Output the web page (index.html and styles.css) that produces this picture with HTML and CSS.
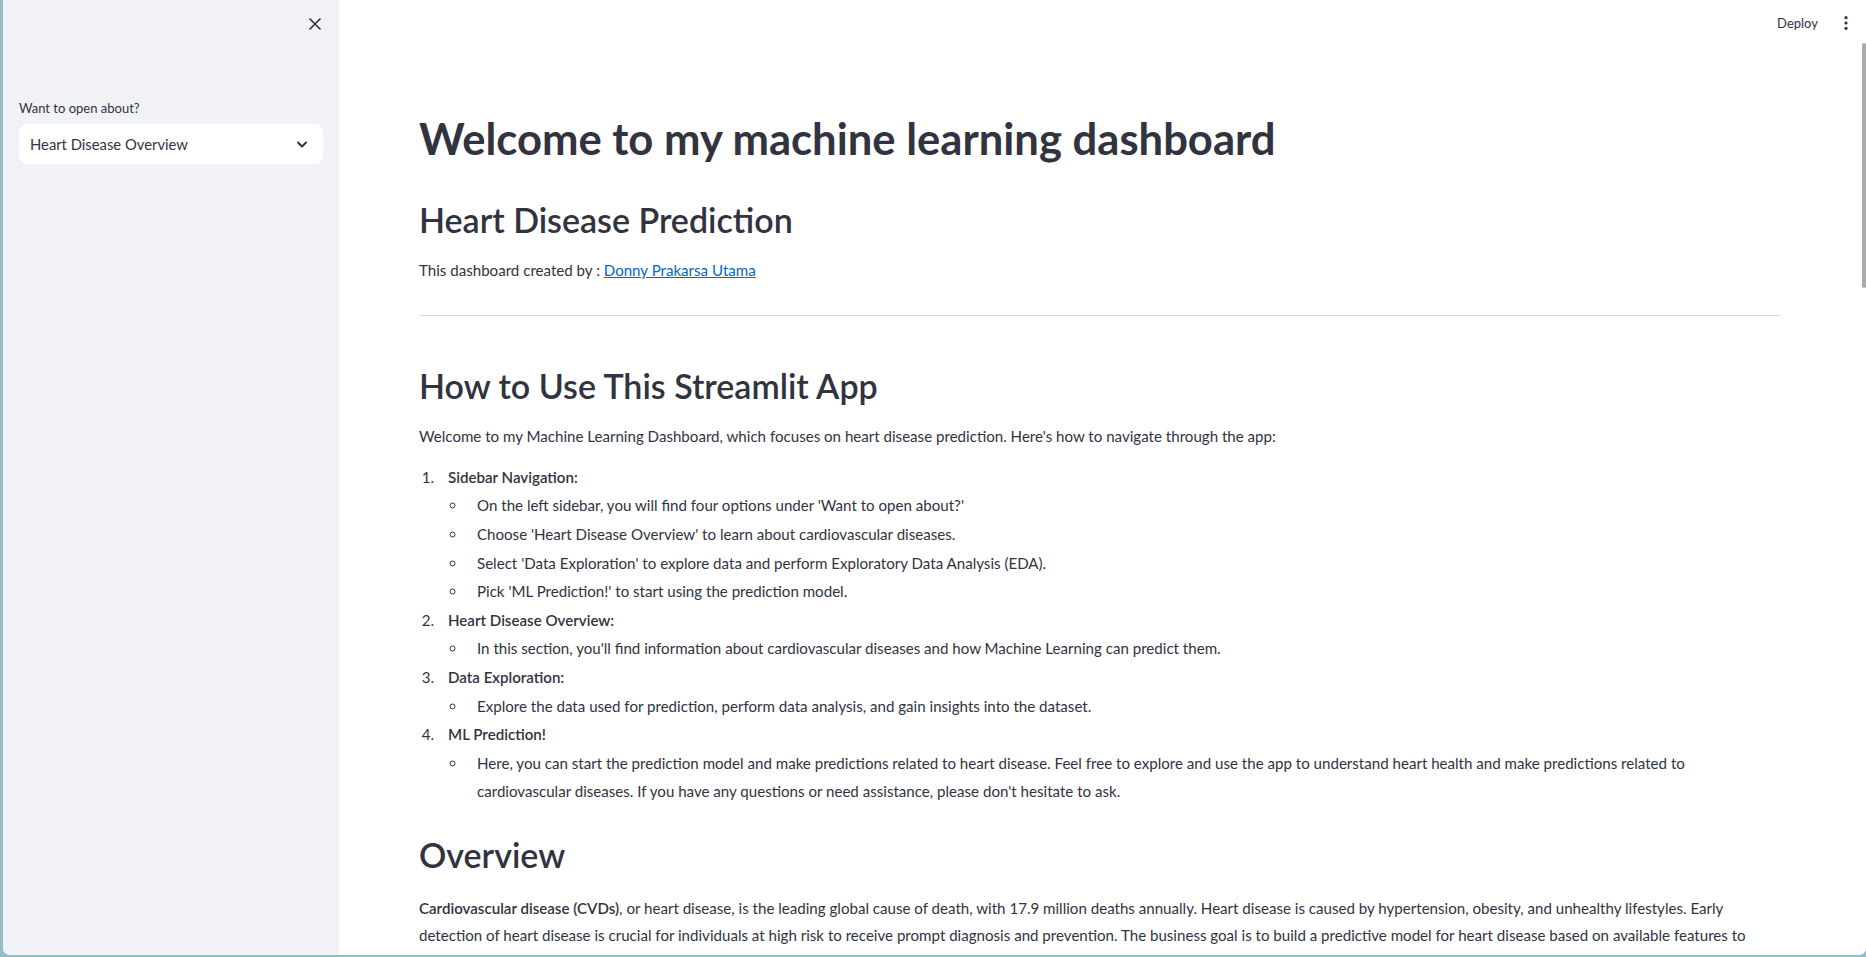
FILE: index.html
```html
<!DOCTYPE html>
<html lang="en">
<head>
<meta charset="utf-8">
<title>Heart Disease Overview</title>
<link rel="stylesheet" href="styles.css">
</head>
<body>
<div class="window">
  <aside class="sidebar">
    <div class="sidebar-top">
      <button class="icon-btn" aria-label="Close sidebar">
        <svg width="12" height="12" viewBox="0 0 12 12"><path d="M1 1L11 11M11 1L1 11" stroke="#31333f" stroke-width="1.7" stroke-linecap="round"/></svg>
      </button>
    </div>
    <div class="sidebar-body">
      <div class="widget-label">Want to open about?</div>
      <div class="select">
        <span class="select-value">Heart Disease Overview</span>
        <svg class="chevron" width="12" height="12" viewBox="0 0 12 12"><path d="M2 4.5L6 8.5L10 4.5" fill="none" stroke="#31333f" stroke-width="2" stroke-linecap="round" stroke-linejoin="round"/></svg>
      </div>
    </div>
  </aside>
  <main class="main">
    <header class="topbar">
      <span class="deploy">Deploy</span>
      <button class="icon-btn" aria-label="Main menu">
        <svg width="6" height="16" viewBox="0 0 6 16" fill="#31333f"><circle cx="3" cy="2.7" r="1.6"/><circle cx="3" cy="8" r="1.6"/><circle cx="3" cy="13.3" r="1.6"/></svg>
      </button>
    </header>
    <div class="content">
      <h1 class="title">Welcome to my machine learning dashboard</h1>
      <h2 class="subtitle">Heart Disease Prediction</h2>
      <p class="byline">This dashboard created by : <a href="#">Donny Prakarsa Utama</a></p>
      <hr class="divider">
      <h2 class="section-title">How to Use This Streamlit App</h2>
      <p class="intro">Welcome to my Machine Learning Dashboard, which focuses on heart disease prediction. Here's how to navigate through the app:</p>
      <ol class="steps">
        <li><strong>Sidebar Navigation:</strong>
          <ul>
            <li>On the left sidebar, you will find four options under 'Want to open about?'</li>
            <li>Choose 'Heart Disease Overview' to learn about cardiovascular diseases.</li>
            <li>Select 'Data Exploration' to explore data and perform Exploratory Data Analysis (EDA).</li>
            <li>Pick 'ML Prediction!' to start using the prediction model.</li>
          </ul>
        </li>
        <li><strong>Heart Disease Overview:</strong>
          <ul>
            <li>In this section, you'll find information about cardiovascular diseases and how Machine Learning can predict them.</li>
          </ul>
        </li>
        <li><strong>Data Exploration:</strong>
          <ul>
            <li>Explore the data used for prediction, perform data analysis, and gain insights into the dataset.</li>
          </ul>
        </li>
        <li><strong>ML Prediction!</strong>
          <ul>
            <li>Here, you can start the prediction model and make predictions related to heart disease. Feel free to explore and use the app to understand heart health and make predictions related to cardiovascular diseases. If you have any questions or need assistance, please don't hesitate to ask.</li>
          </ul>
        </li>
      </ol>
      <h2 class="overview-title">Overview</h2>
      <p class="overview-text"><strong>Cardiovascular disease (CVDs)</strong>, or heart disease, is the leading global cause of death, with 17.9 million deaths annually. Heart disease is caused by hypertension, obesity, and unhealthy lifestyles. Early detection of heart disease is crucial for individuals at high risk to receive prompt diagnosis and prevention. The business goal is to build a predictive model for heart disease based on available features to assist doctors in making accurate diagnoses. The aim is to ensure early treatment of heart conditions and to help reduce the mortality rate.</p>
    </div>
    <div class="scroll-thumb"></div>
  </main>
</div>
</body>
</html>
```

FILE: styles.css
```css
* {
  box-sizing: border-box;
}

html,
body {
  margin: 0;
  padding: 0;
  height: 100%;
}

body {
  background: #93bec6;
  overflow: hidden;
  font-family: Lato, "Noto Sans", sans-serif;
  color: #31333f;
}

.window {
  display: flex;
  height: 955px;
  margin-left: 3px;
  background: #ffffff;
  border-bottom-left-radius: 7px;
  border-bottom-right-radius: 7px;
  overflow: hidden;
}

/* ---------- sidebar ---------- */
.sidebar {
  width: 336px;
  flex: none;
  background: #f0f2f6;
}

.sidebar-top {
  height: 48px;
  display: flex;
  justify-content: flex-end;
  align-items: center;
  padding-right: 12px;
}

.icon-btn {
  border: 0;
  background: none;
  padding: 0;
  width: 24px;
  height: 24px;
  display: flex;
  align-items: center;
  justify-content: center;
  cursor: pointer;
}

.sidebar-body {
  padding: 49px 16px 0;
}

.widget-label {
  font-size: 13px;
  line-height: 22px;
  margin-bottom: 5px;
}

.select {
  height: 40px;
  background: #ffffff;
  border-radius: 8px;
  display: flex;
  align-items: center;
  justify-content: space-between;
  padding: 0 15px 0 11px;
  font-size: 14.8px;
}

/* ---------- main ---------- */
.main {
  flex: 1;
  min-width: 0;
  position: relative;
  display: flex;
  flex-direction: column;
}

.topbar {
  height: 46px;
  flex: none;
  display: flex;
  justify-content: flex-end;
  align-items: center;
  padding-right: 8px;
}

.deploy {
  font-size: 13px;
  margin-right: 16px;
}

.content {
  padding: 66.1px 85px 0 80px;
  font-size: 15.1px;
}

.content h1,
.content h2,
.content p,
.content ol,
.content ul {
  margin: 0;
}

.title {
  font-size: 43.6px;
  font-weight: 700;
  line-height: 52px;
}

.subtitle,
.section-title,
.overview-title {
  font-size: 34px;
  font-weight: 600;
  line-height: 41px;
}

.content .subtitle {
  margin-top: 34.5px;
}

.content .byline {
  line-height: 27.4px;
  margin-top: 17.6px;
}

.byline a {
  color: #0068c9;
}

.divider {
  border: 0;
  border-top: 1px solid #d6d6d9;
  margin: 30.4px 0 0;
}

.content .section-title {
  margin-top: 49.3px;
}

.content .intro {
  line-height: 27.4px;
  margin-top: 16.9px;
}

.content .steps {
  margin-top: 12.2px;
  padding: 0;
  line-height: 28.6px;
}

.steps li {
  margin-left: 19px;
  padding-left: 10px;
}

.content .steps ul {
  padding: 0;
  list-style-type: circle;
}

.steps strong,
.overview-text strong {
  font-weight: 600;
}

.content .overview-title {
  margin-top: 28.1px;
}

.content .overview-text {
  line-height: 27.4px;
  margin-top: 19.6px;
}

.scroll-thumb {
  position: absolute;
  top: 43px;
  right: 0;
  width: 4px;
  height: 245px;
  background: #a9a9ae;
  border-radius: 2px;
}
```
